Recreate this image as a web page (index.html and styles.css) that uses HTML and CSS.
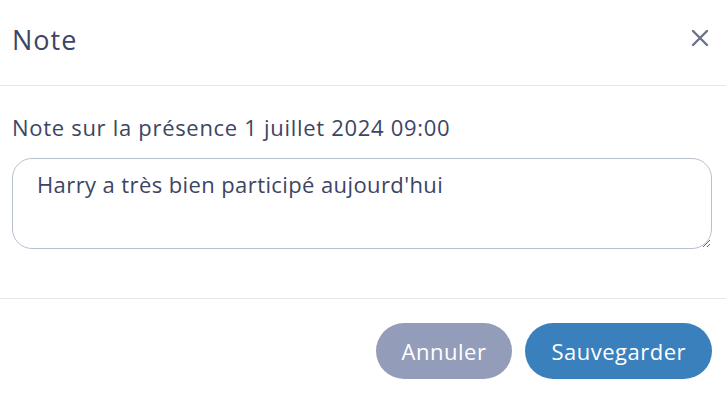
FILE: index.html
```html
<!DOCTYPE html>
<html lang="fr">
<head>
  <meta charset="UTF-8" />
  <title>Note</title>
  <link rel="stylesheet" href="styles.css">
</head>
<body>
  <div class="modal">
    <div class="modal-header">
      <h2 class="modal-title">Note</h2>
      <button class="close-btn" aria-label="Fermer">
        <svg width="18" height="18" viewBox="0 0 18 18">
          <path d="M2 2 L16 16 M16 2 L2 16" stroke="#6b7288" stroke-width="2.4" stroke-linecap="round" fill="none"/>
        </svg>
      </button>
    </div>

    <div class="modal-body">
      <label class="note-label" for="note">Note sur la présence 1 juillet 2024 09:00</label>
      <textarea id="note" class="note-input">Harry a très bien participé aujourd'hui</textarea>
    </div>

    <div class="modal-footer">
      <button class="btn btn-cancel">Annuler</button>
      <button class="btn btn-save">Sauvegarder</button>
    </div>
  </div>
</body>
</html>
```

FILE: styles.css
```css
:root {
  --text: #3d4563;
  --muted: #939db9;
  --primary: #3a80bd;
  --line: #e4e6ec;
}

body {
  margin: 0;
  font-family: 'Open Sans', 'Noto Sans', sans-serif;
  background: #fff;
  color: var(--text);
}

.modal {
  width: 726px;
  height: 394px;
  display: flex;
  flex-direction: column;
}

.modal-header {
  display: flex;
  align-items: center;
  justify-content: space-between;
  height: 78px;
  padding: 0 17px 7px 12px;
  border-bottom: 1px solid var(--line);
}

.modal-title {
  margin: 0;
  font-size: 27px;
  font-weight: 400;
  letter-spacing: 1px;
}

.close-btn {
  border: none;
  background: none;
  padding: 0;
  margin-top: -2px;
  cursor: pointer;
  display: flex;
}

.modal-body {
  padding: 26px 14px 49px 12px;
  border-bottom: 1px solid var(--line);
  display: flex;
  flex-direction: column;
}

.note-label {
  font-size: 22px;
  line-height: 30px;
  letter-spacing: 0.7px;
  margin-bottom: 16px;
}

.note-input {
  height: 91px;
  box-sizing: border-box;
  padding: 11px 24px;
  border: 1px solid #b9c0cd;
  border-radius: 20px;
  font-family: inherit;
  font-size: 22px;
  line-height: 28px;
  letter-spacing: 0.4px;
  color: var(--text);
  resize: vertical;
  outline: none;
}

.modal-footer {
  display: flex;
  justify-content: flex-end;
  gap: 13px;
  padding: 24px 14px 0 12px;
}

.btn {
  height: 56px;
  padding: 0 26px;
  border: none;
  border-radius: 28px;
  font-family: inherit;
  font-size: 22px;
  letter-spacing: 0.5px;
  color: #fff;
  cursor: pointer;
}

.btn-cancel {
  background: var(--muted);
}

.btn-save {
  background: var(--primary);
}
```
